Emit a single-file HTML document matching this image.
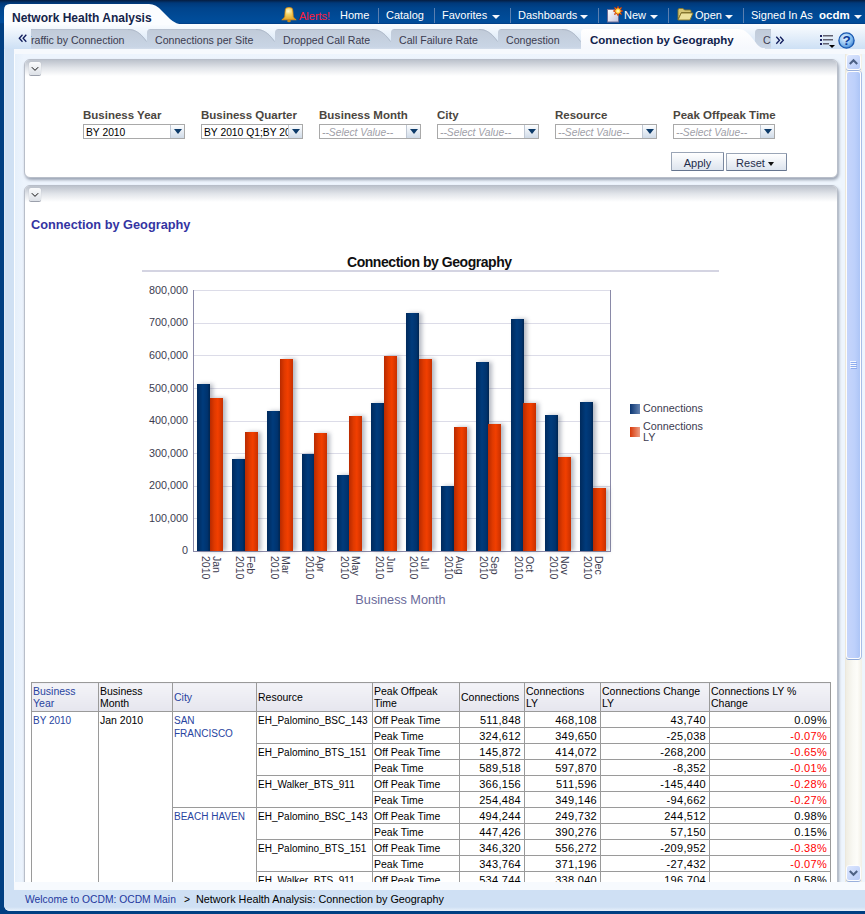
<!DOCTYPE html>
<html><head><meta charset="utf-8">
<style>
*{box-sizing:border-box;margin:0;padding:0}
html,body{width:865px;height:914px;overflow:hidden}
body{position:relative;background:#003f82;font-family:"Liberation Sans",sans-serif;color:#000}
.a{position:absolute}
/* header */
#hdr{left:0;top:0;width:865px;height:24px;background:linear-gradient(#061d40 0px,#00397a 3px,#00448c 8px,#004c99 19px,#004b98 22.5px,#003a82 24px)}
#frame{left:4px;top:24px;width:861px;height:887px;background:#f5f9fd;border-bottom-left-radius:6px}
#tabrow{left:4px;top:24px;width:861px;height:25px;background:linear-gradient(#fbfdff,#cde0f5)}
#content{left:14px;top:49px;width:851px;height:841px;background:linear-gradient(90deg,#e6f0fb,#edf4fd 9px,#eef5fd);border-left:1px solid #fbfdff;border-bottom-left-radius:5px}
#leftstrip{left:4px;top:49px;width:10px;height:841px;background:#cfe0f3;border-left:1px solid #dde9f7}
#footer{left:4px;top:890px;width:861px;height:21px;background:linear-gradient(#cfe0f4 0px,#cfe0f4 17px,#e8f1fb 21px);border-bottom-left-radius:6px}
.nav{top:8px;height:14px;font-size:11px;color:#fff;line-height:14px;white-space:nowrap}
.sep{top:8px;width:1px;height:15px;background:#5a7fb0}
.dd{width:0;height:0;border-left:4px solid transparent;border-right:4px solid transparent;border-top:4px solid #f4f6fa}
.tab{top:30px;height:20px;background:linear-gradient(#c9d3e0,#bfcbdb);border-top-left-radius:6px;font-size:10.6px;color:#3b3b4f;line-height:20px;white-space:nowrap}
.panel{background:#fff;border-radius:6px;border:1px solid #b8bec9;box-shadow:1px 2px 3px rgba(100,110,130,.6)}
.ptop{left:0;top:0;right:0;height:16px;border-radius:5px 5px 0 0;background:linear-gradient(#bcc2cc,#e2e5ea 8px,#fff 16px)}
.colbtn{width:12px;height:13px;border-radius:2px;background:linear-gradient(#fafbfc,#dde1e7);box-shadow:0 1px 0 rgba(80,90,110,.55),0 0 1px rgba(80,90,110,.4)}
.lbl{font-size:11.5px;font-weight:bold;color:#4b4640;white-space:nowrap;top:109px}
.sel{top:124px;width:102px;height:15px;border:1px solid #a9a9a9;background:#fff;font-size:10.3px;line-height:16px;padding-left:2px;white-space:nowrap;overflow:hidden}
.sel i{color:#a0a0a8}
.selb{position:absolute;right:0;top:0;width:14px;height:13px;background:linear-gradient(#fdfeff,#d0dbe8);border-left:1px solid #c0c8d4}
.selb:after{content:"";position:absolute;left:3px;top:4px;border-left:4px solid transparent;border-right:4px solid transparent;border-top:5px solid #0d3b6a}
.btn{height:19px;border:1px solid #9aa5b6;border-bottom-color:#66758f;border-right-color:#7a889f;border-radius:1px;background:linear-gradient(#ffffff,#dde4ee);font-size:11px;line-height:21px;text-align:center;color:#1f2d4a}
/* chart */
.grid{left:194px;width:416px;height:1px;background:#dcdce8}
.yl{left:140px;width:48px;text-align:right;font-size:10.8px;color:#3c3c50;line-height:12px}
.bar{bottom:363px;width:13px}
.bb{background:linear-gradient(90deg,#002a5c,#003b7c 45%,#00336e 80%,#002550);box-shadow:3px 0 4px rgba(90,100,120,.45)}
.bo{background:linear-gradient(90deg,#b82a00,#e03a00 35%,#f23f00 60%,#c83000);box-shadow:3px 0 4px rgba(90,100,120,.45)}
.xl{top:555.6px;writing-mode:vertical-rl;font-size:10.5px;line-height:11px;color:#3c3c50;white-space:nowrap}
/* table */
table{border-collapse:collapse;font-size:10.5px;color:#000}
td,th{border:1px solid #9a9a9a;padding:0 3px 0 1px;vertical-align:top;line-height:12.5px;white-space:nowrap;font-weight:normal;text-align:left}
th{background:linear-gradient(#f4f4f8,#e6e6ee);vertical-align:middle}
td{height:16px;line-height:13px;padding-top:2px}
.r{text-align:right;font-size:11px;letter-spacing:.3px;padding-right:3px}
.s10{font-size:10px;line-height:12.5px;padding-top:3px}
.lk{color:#2844a0}
.neg{color:#ff0000}
</style></head><body>
<div class="a" id="hdr"></div>
<div class="a" id="frame"></div>
<div class="a" id="tabrow"></div>
<div class="a" id="leftstrip"></div>
<div class="a" id="content"></div>
<div class="a" style="left:14px;top:49px;width:851px;height:5px;background:#f6f9fd"></div>
<div class="a" id="footer"></div>
<div class="a" style="left:14px;top:882px;width:851px;height:8px;background:#f7fafe;border-bottom-left-radius:5px"></div>

<!-- title tab shape -->
<svg class="a" style="left:4px;top:4px" width="180" height="21" viewBox="0 0 180 21">
<path d="M0 21 L0 6 Q0 0 6 0 L145 0 Q152 0 158 7 L166 15 Q172 20.5 180 20.5 L180 21 Z" fill="#fbfdff"/>
</svg>
<div class="a" style="left:12px;top:10.6px;font-size:12px;font-weight:bold;color:#14244a;white-space:nowrap;line-height:14px">Network Health Analysis</div>

<!-- nav -->
<svg class="a" style="left:281px;top:7px" width="16" height="16" viewBox="0 0 16 16">
<defs><radialGradient id="bell" cx=".45" cy=".3" r=".75"><stop offset="0" stop-color="#fff8d0"/><stop offset=".35" stop-color="#f4d468"/><stop offset="1" stop-color="#e0a020"/></radialGradient></defs>
<path d="M5.2 1 Q8 0 10.8 1 Q11.8 2 11.9 5 L12.2 9.5 Q12.8 11.5 15.2 12.8 L0.8 12.8 Q3.2 11.5 3.8 9.5 L4.1 5 Q4.2 2 5.2 1Z" fill="url(#bell)" stroke="#e8900c" stroke-width=".8"/>
<ellipse cx="8" cy="14" rx="1.8" ry="1.3" fill="#c88a18"/>
</svg>
<div class="a nav" style="left:299px;top:9px;color:#ff1a3a">Alerts!</div>
<div class="a nav" style="left:340px">Home</div>
<div class="a sep" style="left:378px"></div>
<div class="a nav" style="left:386px">Catalog</div>
<div class="a sep" style="left:434px"></div>
<div class="a nav" style="left:442px">Favorites</div>
<div class="a dd" style="left:492px;top:15px"></div>
<div class="a sep" style="left:510px"></div>
<div class="a nav" style="left:518px">Dashboards</div>
<div class="a dd" style="left:580px;top:15px"></div>
<div class="a sep" style="left:598px"></div>
<svg class="a" style="left:606px;top:6px" width="17" height="17" viewBox="0 0 17 17">
<defs><linearGradient id="pg" x1="0" y1="0" x2="1" y2="1"><stop offset="0" stop-color="#ffffff"/><stop offset="1" stop-color="#c4c4dc"/></linearGradient></defs>
<rect x="1.5" y="3.5" width="11" height="12.5" fill="url(#pg)" stroke="#6c6c94" stroke-width="1"/>
<path d="M12 0.3 L13 2.6 L15.5 1.5 L14.4 4 L16.7 5 L14.4 6 L15.5 8.5 L13 7.4 L12 9.7 L11 7.4 L8.5 8.5 L9.6 6 L7.3 5 L9.6 4 L8.5 1.5 L11 2.6 Z" fill="#ffd030" stroke="#d03000" stroke-width=".8"/>
<circle cx="12" cy="5" r="1.6" fill="#fff6b0"/>
</svg>
<div class="a nav" style="left:624px">New</div>
<div class="a dd" style="left:650px;top:15px"></div>
<div class="a sep" style="left:668px"></div>
<svg class="a" style="left:677px;top:7px" width="17" height="15" viewBox="0 0 17 15">
<path d="M1 3 Q1 1.5 2.5 1.5 L6 1.5 L7.5 3 L13 3 Q14 3 14 4 L14 5.5 L4.5 5.5 L1 12.5 Z" fill="#d4c676" stroke="#857428" stroke-width=".9"/>
<path d="M1 13 L4.2 6 L16 6 L13 13 Z" fill="#ece29c" stroke="#857428" stroke-width=".9" stroke-linejoin="round"/>
</svg>
<div class="a nav" style="left:695px">Open</div>
<div class="a dd" style="left:725px;top:15px"></div>
<div class="a sep" style="left:743px"></div>
<div class="a nav" style="left:751px">Signed In As</div>
<div class="a nav" style="left:819px;font-weight:bold;font-size:11.5px">ocdm</div>
<div class="a dd" style="left:854px;top:15px"></div>

<!-- tabs -->
<div class="a" style="left:4px;top:24px;width:27px;height:25px;"></div>
<svg class="a" style="left:18px;top:34px" width="10" height="9"><path d="M4.5 0.8 L1.3 4.3 L4.5 7.8 M8.3 0.8 L5.1 4.3 L8.3 7.8" fill="none" stroke="#101c5c" stroke-width="1.3"/></svg>
<svg class="a" style="left:0;top:29px" width="865" height="20" viewBox="0 0 865 20">
<defs><linearGradient id="tg" x1="0" y1="0" x2="0" y2="1"><stop offset="0" stop-color="#b2bccb"/><stop offset=".07" stop-color="#c1cbd9"/><stop offset=".9" stop-color="#c9d5e5"/><stop offset="1" stop-color="#d3ddeb"/></linearGradient>
<linearGradient id="ta" x1="0" y1="0" x2="0" y2="1"><stop offset="0" stop-color="#ffffff"/><stop offset="1" stop-color="#f5f8fd"/></linearGradient></defs>
<path d="M31 20 L31 0 L128 0 C135 0 140 3 147 12.3 L147 20 Z" fill="url(#tg)"/><path d="M128 0.5 C135 0.5 140 3.5 146.5 12.5" fill="none" stroke="#aab5c5" stroke-width=".8"/>
<path d="M147 20 L147 3.5 Q147 0 150.5 0 L256 0 C263 0 268 3 275 12.3 L275 20 Z" fill="url(#tg)"/><path d="M256 0.5 C263 0.5 268 3.5 274.5 12.5" fill="none" stroke="#aab5c5" stroke-width=".8"/>
<path d="M275 20 L275 3.5 Q275 0 278.5 0 L372 0 C379 0 384 3 391 12.3 L391 20 Z" fill="url(#tg)"/><path d="M372 0.5 C379 0.5 384 3.5 390.5 12.5" fill="none" stroke="#aab5c5" stroke-width=".8"/>
<path d="M391 20 L391 3.5 Q391 0 394.5 0 L479 0 C486 0 491 3 498 12.3 L498 20 Z" fill="url(#tg)"/><path d="M479 0.5 C486 0.5 491 3.5 497.5 12.5" fill="none" stroke="#aab5c5" stroke-width=".8"/>
<path d="M498 20 L498 3.5 Q498 0 501.5 0 L562 0 C569 0 574 3 581 12.3 L581 20 Z" fill="url(#tg)"/><path d="M562 0.5 C569 0.5 574 3.5 580.5 12.5" fill="none" stroke="#aab5c5" stroke-width=".8"/>
<path d="M755 20 L755 3.5 Q755 0 758.5 0 L771 0 L771 20 Z" fill="url(#tg)"/>
<path d="M581 20 L581 3.5 Q581 0 584.5 0 L738 0 C745 0 749 5 753 10 C757 15 759 19.3 765 19.3 L765 20 Z" fill="url(#ta)"/>
</svg>
<div class="a tab" style="left:31px;background:none;width:100px;overflow:hidden"><span style="position:absolute;left:-6px;top:0">Traffic by Connection</span></div>
<div class="a tab" style="left:155px;background:none">Connections per Site</div>
<div class="a tab" style="left:283px;background:none">Dropped Call Rate</div>
<div class="a tab" style="left:399px;background:none">Call Failure Rate</div>
<div class="a tab" style="left:506px;background:none">Congestion</div>
<div class="a tab" style="left:590px;background:none;font-weight:bold;color:#10224c;font-size:11.5px">Connection by Geography</div>
<div class="a tab" style="left:763px;background:none;width:8px;overflow:hidden">C</div>
<svg class="a" style="left:775px;top:36px" width="10" height="9"><path d="M1.3 0.8 L4.5 4.3 L1.3 7.8 M5.1 0.8 L8.3 4.3 L5.1 7.8" fill="none" stroke="#101c5c" stroke-width="1.3"/></svg>
<svg class="a" style="left:819.5px;top:34px" width="16" height="15" viewBox="0 0 16 15">
<g fill="#1a2060"><rect x="0" y="1" width="2" height="2"/><rect x="0" y="5" width="2" height="2"/><rect x="0" y="9" width="2" height="2"/></g>
<g fill="#606070"><rect x="3" y="1" width="10" height="1.5"/><rect x="3" y="5" width="10" height="1.5"/><rect x="3" y="9" width="6" height="1.5"/></g>
<path d="M9 11 L15 11 L12 14 Z" fill="#000"/>
</svg>
<svg class="a" style="left:838px;top:32px" width="17" height="17" viewBox="0 0 17 17">
<defs><radialGradient id="hg" cx=".4" cy=".35" r=".7"><stop offset="0" stop-color="#e8f4ff"/><stop offset=".6" stop-color="#8cc0f0"/><stop offset="1" stop-color="#3a80d0"/></radialGradient></defs>
<circle cx="8.5" cy="8.5" r="7.6" fill="url(#hg)" stroke="#1858b0" stroke-width="1.3"/>
<text x="8.5" y="13.3" text-anchor="middle" font-family="Liberation Sans" font-weight="bold" font-size="13.5" fill="#0a3a9a">?</text>
</svg>

<!-- panel 1 -->
<div class="a panel" style="left:24px;top:59px;width:814px;height:119px">
 <div class="a ptop"></div>
 <div class="a colbtn" style="left:4px;top:2px"></div>
</div>
<svg class="a" style="left:29px;top:62px" width="12" height="13"><path d="M2.8 5.2 L6 8.4 L9.2 5.2" fill="none" stroke="#000" stroke-width=".95"/></svg>
<div class="a lbl" style="left:83px">Business Year</div>
<div class="a lbl" style="left:201px">Business Quarter</div>
<div class="a lbl" style="left:319px">Business Month</div>
<div class="a lbl" style="left:437px">City</div>
<div class="a lbl" style="left:555px">Resource</div>
<div class="a lbl" style="left:673px">Peak Offpeak Time</div>
<div class="a sel" style="left:83px">BY 2010<span class="selb"></span></div>
<div class="a sel" style="left:201px">BY 2010 Q1;BY 2010 Q2<span class="selb"></span></div>
<div class="a sel" style="left:319px"><i>--Select Value--</i><span class="selb"></span></div>
<div class="a sel" style="left:437px"><i>--Select Value--</i><span class="selb"></span></div>
<div class="a sel" style="left:555px"><i>--Select Value--</i><span class="selb"></span></div>
<div class="a sel" style="left:673px"><i>--Select Value--</i><span class="selb"></span></div>
<div class="a btn" style="left:671px;top:152px;width:53px">Apply</div>
<div class="a btn" style="left:726px;top:153px;width:61px;height:18px;line-height:19px;padding-right:3px">Reset&nbsp;<span style="display:inline-block;border-left:3.5px solid transparent;border-right:3.5px solid transparent;border-top:4px solid #111;vertical-align:middle"></span></div>

<!-- panel 2 -->
<div class="a" style="left:20px;top:183px;width:826px;height:699px;overflow:hidden">
<div class="a panel" style="left:4px;top:2px;width:814px;height:760px">
 <div class="a ptop"></div>
 <div class="a colbtn" style="left:4px;top:2px"></div>
</div>
</div>
<svg class="a" style="left:29px;top:188px" width="12" height="13"><path d="M2.8 5.2 L6 8.4 L9.2 5.2" fill="none" stroke="#000" stroke-width=".95"/></svg>
<div class="a" style="left:31px;top:217px;font-size:12.75px;line-height:15px;font-weight:bold;color:#3434a2;white-space:nowrap">Connection by Geography</div>

<!-- chart -->
<div class="a" style="left:142px;top:270px;width:577px;height:2px;background:#d4d4e2"></div>
<div class="a" style="left:347px;top:254px;font-size:14px;line-height:16px;letter-spacing:-0.45px;font-weight:bold;color:#101010;white-space:nowrap">Connection by Geography</div>
<div id="chart">
<div class="a grid" style="top:518px"></div>
<div class="a grid" style="top:486px"></div>
<div class="a grid" style="top:453px"></div>
<div class="a grid" style="top:421px"></div>
<div class="a grid" style="top:388px"></div>
<div class="a grid" style="top:355px"></div>
<div class="a grid" style="top:323px"></div>
<div class="a grid" style="top:290px"></div>
<div class="a" style="left:193px;top:290px;width:1px;height:262px;background:#8a8aa8"></div>
<div class="a" style="left:610px;top:290px;width:1px;height:262px;background:#8a8aa8"></div>
<div class="a" style="left:193px;top:551px;width:418px;height:1px;background:#8a8aa8"></div>
<div class="a yl" style="top:544.4px">0</div>
<div class="a yl" style="top:511.8px">100,000</div>
<div class="a yl" style="top:479.2px">200,000</div>
<div class="a yl" style="top:446.6px">300,000</div>
<div class="a yl" style="top:414.0px">400,000</div>
<div class="a yl" style="top:381.5px">500,000</div>
<div class="a yl" style="top:348.9px">600,000</div>
<div class="a yl" style="top:316.3px">700,000</div>
<div class="a yl" style="top:283.7px">800,000</div>
<div class="a bar bb" style="left:197.3px;top:384.2px;height:166.8px;bottom:auto"></div>
<div class="a bar bo" style="left:210.0px;top:398.2px;height:152.8px;bottom:auto"></div>
<div class="a xl" style="left:199.5px">Jan<br>2010</div>
<div class="a bar bb" style="left:232.1px;top:459.1px;height:91.9px;bottom:auto"></div>
<div class="a bar bo" style="left:244.8px;top:432.1px;height:118.9px;bottom:auto"></div>
<div class="a xl" style="left:234.3px">Feb<br>2010</div>
<div class="a bar bb" style="left:266.9px;top:411.2px;height:139.8px;bottom:auto"></div>
<div class="a bar bo" style="left:279.6px;top:359.1px;height:191.9px;bottom:auto"></div>
<div class="a xl" style="left:269.1px">Mar<br>2010</div>
<div class="a bar bb" style="left:301.7px;top:454.2px;height:96.8px;bottom:auto"></div>
<div class="a bar bo" style="left:314.4px;top:433.0px;height:118.0px;bottom:auto"></div>
<div class="a xl" style="left:303.9px">Apr<br>2010</div>
<div class="a bar bb" style="left:336.5px;top:475.1px;height:75.9px;bottom:auto"></div>
<div class="a bar bo" style="left:349.2px;top:416.4px;height:134.6px;bottom:auto"></div>
<div class="a xl" style="left:338.7px">May<br>2010</div>
<div class="a bar bb" style="left:371.3px;top:403.4px;height:147.6px;bottom:auto"></div>
<div class="a bar bo" style="left:384.0px;top:356.1px;height:194.9px;bottom:auto"></div>
<div class="a xl" style="left:373.5px">Jun<br>2010</div>
<div class="a bar bb" style="left:406.1px;top:313.1px;height:237.9px;bottom:auto"></div>
<div class="a bar bo" style="left:418.8px;top:359.1px;height:191.9px;bottom:auto"></div>
<div class="a xl" style="left:408.3px">Jul<br>2010</div>
<div class="a bar bb" style="left:440.9px;top:486.2px;height:64.8px;bottom:auto"></div>
<div class="a bar bo" style="left:453.6px;top:427.2px;height:123.8px;bottom:auto"></div>
<div class="a xl" style="left:443.1px">Aug<br>2010</div>
<div class="a bar bb" style="left:475.7px;top:362.0px;height:189.0px;bottom:auto"></div>
<div class="a bar bo" style="left:488.4px;top:423.9px;height:127.1px;bottom:auto"></div>
<div class="a xl" style="left:477.9px">Sep<br>2010</div>
<div class="a bar bb" style="left:510.5px;top:319.3px;height:231.7px;bottom:auto"></div>
<div class="a bar bo" style="left:523.2px;top:403.1px;height:147.9px;bottom:auto"></div>
<div class="a xl" style="left:512.7px">Oct<br>2010</div>
<div class="a bar bb" style="left:545.3px;top:415.1px;height:135.9px;bottom:auto"></div>
<div class="a bar bo" style="left:558.0px;top:457.1px;height:93.9px;bottom:auto"></div>
<div class="a xl" style="left:547.5px">Nov<br>2010</div>
<div class="a bar bb" style="left:580.1px;top:402.1px;height:148.9px;bottom:auto"></div>
<div class="a bar bo" style="left:592.8px;top:488.1px;height:62.9px;bottom:auto"></div>
<div class="a xl" style="left:582.3px">Dec<br>2010</div>
<div class="a" style="left:630px;top:404px;width:10px;height:10px;background:linear-gradient(90deg,#0c3672,#6584b2)"></div>
<div class="a" style="left:630px;top:427px;width:10px;height:10px;background:linear-gradient(90deg,#d83808,#eca088)"></div>
<div class="a" style="left:643px;top:403px;font-size:10.8px;line-height:11px;color:#3c3c50">Connections</div>
<div class="a" style="left:643px;top:420.5px;font-size:10.8px;line-height:11.4px;color:#3c3c50">Connections<br>LY</div>
<div class="a" style="left:300px;top:592.5px;width:201px;text-align:center;font-size:12.7px;color:#6a6a9a">Business Month</div>
</div><!--/chart-->

<!-- footer text -->
<div class="a" id="ftxt" style="left:25px;top:893px;font-size:10.3px;line-height:13px;white-space:nowrap;color:#24389e">Welcome to OCDM: OCDM Main</div><div class="a" style="left:184px;top:893px;font-size:10.3px;line-height:13px;color:#000">&gt;</div><div class="a" style="left:196px;top:893px;font-size:10.8px;line-height:13px;white-space:nowrap;color:#000">Network Health Analysis: Connection by Geography</div>
<!-- scrollbar -->
<div class="a" id="sbtrack" style="left:845px;top:54px;width:17px;height:828px;background:linear-gradient(90deg,#efede3,#f9f9f4 45%,#fdfdf9 70%,#f1efe6);border-left:1px solid #ece8dc"></div>
<div class="a" style="left:846px;top:54px;width:15px;height:16px;border-radius:3px;background:linear-gradient(135deg,#dde7fe,#b7cbf8);border:1px solid #fdfdfd;box-shadow:0 1px 0 #9ab0dc"></div>
<svg class="a" style="left:846px;top:54px" width="15" height="16"><path d="M3.8 10 L7.5 6.3 L11.2 10" fill="none" stroke="#4d6185" stroke-width="2.1"/></svg>
<div class="a" style="left:846px;top:71px;width:15px;height:588px;border-radius:3px;background:linear-gradient(90deg,#c6d5fb,#bdd0fb 60%,#adc5f6);border:1px solid #fdfdfd;box-shadow:0 1px 0 #8ea8d8,1px 0 0 #a8bde6"></div>
<svg class="a" style="left:850px;top:360px" width="9" height="10"><g stroke="#f4f8ff" stroke-width="1"><line x1="0" y1="1.5" x2="6" y2="1.5"/><line x1="0" y1="3.5" x2="6" y2="3.5"/><line x1="0" y1="5.5" x2="6" y2="5.5"/><line x1="0" y1="7.5" x2="6" y2="7.5"/></g><g stroke="#8eacee" stroke-width="1"><line x1="1" y1="2.5" x2="7" y2="2.5"/><line x1="1" y1="4.5" x2="7" y2="4.5"/><line x1="1" y1="6.5" x2="7" y2="6.5"/><line x1="1" y1="8.5" x2="7" y2="8.5"/></g></svg>
<div class="a" style="left:846px;top:865px;width:15px;height:16px;border-radius:3px;background:linear-gradient(135deg,#dde7fe,#b7cbf8);border:1px solid #fdfdfd;box-shadow:0 1px 0 #9ab0dc"></div>
<svg class="a" style="left:846px;top:865px" width="15" height="16"><path d="M3.8 6 L7.5 9.7 L11.2 6" fill="none" stroke="#4d6185" stroke-width="2.1"/></svg>
<div id="tblwrap" class="a" style="left:0;top:0;width:865px;height:882px;overflow:hidden">
<table class="a" id="tbl" style="left:31px;top:682px;table-layout:fixed;width:800px">
<colgroup><col style="width:67px"><col style="width:74px"><col style="width:84px"><col style="width:116px"><col style="width:87px"><col style="width:65px"><col style="width:76px"><col style="width:109px"><col style="width:121px"></colgroup>
<tr style="height:29px"><th class="lk">Business<br>Year</th><th>Business<br>Month</th><th class="lk">City</th><th>Resource</th><th>Peak Offpeak<br>Time</th><th>Connections</th><th>Connections<br>LY</th><th>Connections Change<br>LY</th><th>Connections LY %<br>Change</th></tr>
<tr><td class="lk s10" rowspan="12">BY 2010</td><td rowspan="12">Jan 2010</td><td class="lk s10" rowspan="6">SAN<br>FRANCISCO</td><td class="s10" rowspan="2">EH_Palomino_BSC_143</td><td>Off Peak Time</td><td class="r">511,848</td><td class="r">468,108</td><td class="r">43,740</td><td class="r">0.09%</td></tr>
<tr><td>Peak Time</td><td class="r">324,612</td><td class="r">349,650</td><td class="r">-25,038</td><td class="r neg">-0.07%</td></tr>
<tr><td class="s10" rowspan="2">EH_Palomino_BTS_151</td><td>Off Peak Time</td><td class="r">145,872</td><td class="r">414,072</td><td class="r">-268,200</td><td class="r neg">-0.65%</td></tr>
<tr><td>Peak Time</td><td class="r">589,518</td><td class="r">597,870</td><td class="r">-8,352</td><td class="r neg">-0.01%</td></tr>
<tr><td class="s10" rowspan="2">EH_Walker_BTS_911</td><td>Off Peak Time</td><td class="r">366,156</td><td class="r">511,596</td><td class="r">-145,440</td><td class="r neg">-0.28%</td></tr>
<tr><td>Peak Time</td><td class="r">254,484</td><td class="r">349,146</td><td class="r">-94,662</td><td class="r neg">-0.27%</td></tr>
<tr><td class="lk s10" rowspan="6">BEACH HAVEN</td><td class="s10" rowspan="2">EH_Palomino_BSC_143</td><td>Off Peak Time</td><td class="r">494,244</td><td class="r">249,732</td><td class="r">244,512</td><td class="r">0.98%</td></tr>
<tr><td>Peak Time</td><td class="r">447,426</td><td class="r">390,276</td><td class="r">57,150</td><td class="r">0.15%</td></tr>
<tr><td class="s10" rowspan="2">EH_Palomino_BTS_151</td><td>Off Peak Time</td><td class="r">346,320</td><td class="r">556,272</td><td class="r">-209,952</td><td class="r neg">-0.38%</td></tr>
<tr><td>Peak Time</td><td class="r">343,764</td><td class="r">371,196</td><td class="r">-27,432</td><td class="r neg">-0.07%</td></tr>
<tr><td class="s10" rowspan="2">EH_Walker_BTS_911</td><td>Off Peak Time</td><td class="r">534,744</td><td class="r">338,040</td><td class="r">196,704</td><td class="r">0.58%</td></tr>
<tr><td>Peak Time</td><td class="r">400,000</td><td class="r">400,000</td><td class="r">0</td><td class="r">0.00%</td></tr>
</table>
</div><!--/tbl-->
</body></html>
